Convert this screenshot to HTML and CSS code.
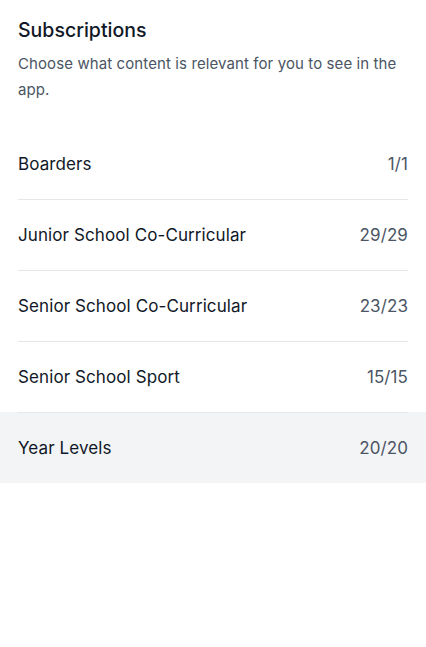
FILE: index.html
```html
<!DOCTYPE html>
<html lang="en">
<head>
    <meta charset="UTF-8">
    <meta name="viewport" content="width=device-width, initial-scale=1.0">
    <title>Subscriptions</title>
    <link rel="stylesheet" href="styles.css">
</head>
<body>
    <header class="intro">
        <h1>Subscriptions</h1>
        <p>Choose what content is relevant for you to see in the app.</p>
    </header>
    <ul class="groups">
        <li class="group">
            <div class="group-row">
                <span class="group-name">Boarders</span>
                <span class="group-count">1/1</span>
            </div>
        </li>
        <li class="group">
            <div class="group-row">
                <span class="group-name">Junior School Co-Curricular</span>
                <span class="group-count">29/29</span>
            </div>
        </li>
        <li class="group">
            <div class="group-row">
                <span class="group-name">Senior School Co-Curricular</span>
                <span class="group-count">23/23</span>
            </div>
        </li>
        <li class="group">
            <div class="group-row">
                <span class="group-name">Senior School Sport</span>
                <span class="group-count">15/15</span>
            </div>
        </li>
        <li class="group active">
            <div class="group-row">
                <span class="group-name">Year Levels</span>
                <span class="group-count">20/20</span>
            </div>
        </li>
    </ul>
</body>
</html>
```

FILE: styles.css
```css
body {
    margin: 0;
    background: #fff;
    font-family: Inter, "Noto Sans", sans-serif;
    color: #111827;
}
.intro {
    padding: 17px 18px 0;
}
.intro h1 {
    margin: 0;
    font-size: 19.5px;
    line-height: 26px;
    font-weight: 500;
}
.intro p {
    margin: 8px 0 0;
    font-size: 15px;
    line-height: 26px;
    color: #4b5563;
    letter-spacing: 0.1px;
}
.groups {
    list-style: none;
    margin: 26px 0 0;
    padding: 0;
}
.group.active {
    background: #f3f4f6;
}
.group-row {
    margin: 0 18px;
    height: 70px;
    display: flex;
    justify-content: space-between;
    align-items: center;
    border-top: 1px solid #e5e7eb;
    font-size: 17px;
    letter-spacing: 0.1px;
}
.group:first-child .group-row {
    border-top: none;
}
.group-name {
    color: #111827;
}
.group-count {
    color: #4b5563;
}
```
